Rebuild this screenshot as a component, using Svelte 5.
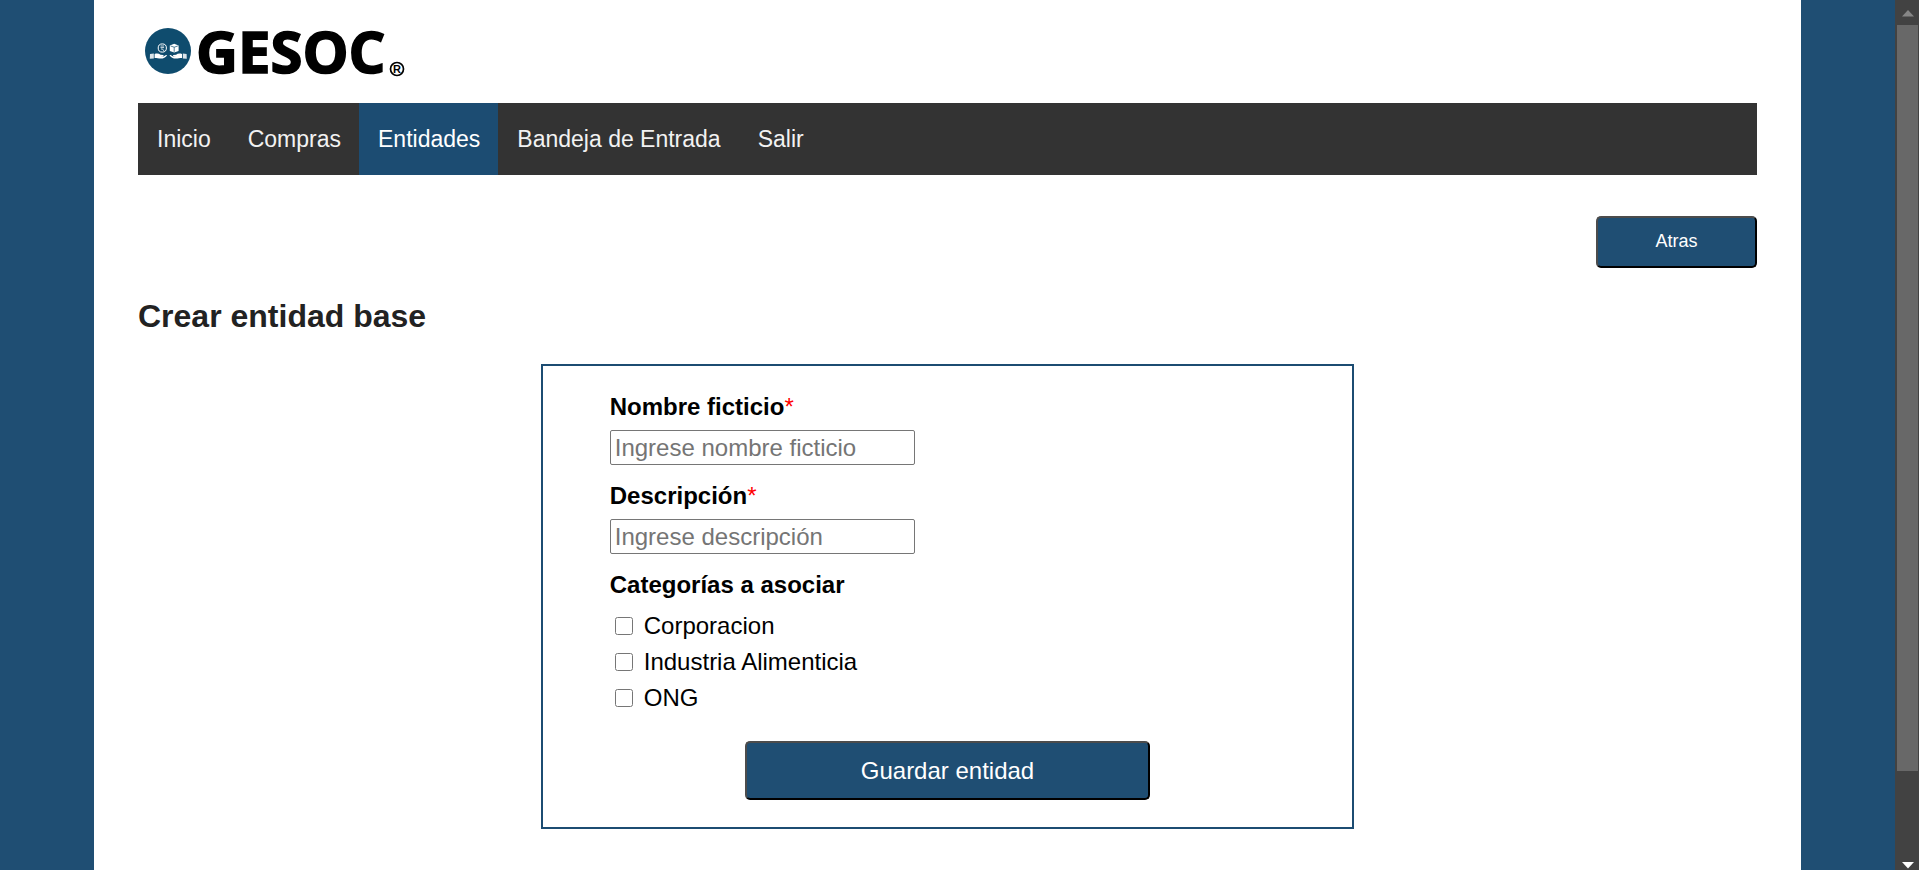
<script>
  const links = [
    { text: 'Inicio' },
    { text: 'Compras' },
    { text: 'Entidades', active: true },
    { text: 'Bandeja de Entrada' },
    { text: 'Salir' }
  ];
  const fields = [
    { id: 'nombre', label: 'Nombre ficticio', placeholder: 'Ingrese nombre ficticio' },
    { id: 'descripcion', label: 'Descripción', placeholder: 'Ingrese descripción' }
  ];
  const categories = ['Corporacion', 'Industria Alimenticia', 'ONG'];
</script>

{#snippet hand()}
  <path d="M12 32l3.8-.6v5.2l-4 .2z" opacity=".85" />
  <path d="M16.6 32C19 31.2 21 31.6 22.5 32.7L25 33C26 33.3 25.6 34.2 25 34.2H22.3L25.5 34.5 28 33.1C28.9 32.7 29.2 33.4 28.6 33.9 26.5 35.8 25 36.6 22.8 36.5 20.5 36.4 19 35.9 16.6 35.9z" />
{/snippet}

<div class="screen">
  <div class="backdrop">
    <div class="page">
      <header>
        <svg class="logo" width="280" height="100" viewBox="0 -22 280 100" role="img" aria-label="GESOC">
          <circle cx="30" cy="29" r="23" fill="#0f4c6e" />
          <g fill="none" stroke="#fff">
            <circle cx="24.3" cy="26" r="4.1" stroke-width="1" />
            <path d="M22.5 24h3.6M22.5 25.6h3.6M23 27h1.5l1.6 2" stroke-width="0.8" />
          </g>
          <path d="M31.8 23.4l4.4-1.6 4.4 1.6v5.6l-4.4 1.6-4.4-1.6z" fill="#fff" />
          <path d="M32.6 24l3.6 1.2 3.6-1.2M36.2 25.2v4.6" fill="none" stroke="#0f4c6e" stroke-width="0.7" />
          <g fill="#fff">{@render hand()}</g>
          <g fill="#fff" transform="translate(60.6 0) scale(-1 1)">{@render hand()}</g>
          <text class="brand" x="58" y="51">GESOC</text>
          <circle cx="259" cy="47" r="6.5" fill="none" stroke="#000" stroke-width="1.7" />
          <text class="mark" x="259" y="51" text-anchor="middle">R</text>
        </svg>
      </header>

      <nav>
        {#each links as link}
          <a href="#top" class:active={link.active}>{link.text}</a>
        {/each}
      </nav>

      <div class="toolbar">
        <button type="button" class="back">Atras</button>
      </div>

      <h1>Crear entidad base</h1>

      <form>
        {#each fields as field}
          <div class="field">
            <label class="title" for={field.id}>{field.label}<span>*</span></label>
            <input type="text" id={field.id} placeholder={field.placeholder} />
          </div>
        {/each}
        <fieldset>
          <legend class="title">Categorías a asociar</legend>
          {#each categories as category}
            <label class="option"><input type="checkbox" />{category}</label>
          {/each}
        </fieldset>
        <button type="button" class="save">Guardar entidad</button>
      </form>
    </div>
  </div>

  <div class="scrollbar" aria-hidden="true">
    <svg width="12" height="7" viewBox="0 0 12 7"><path d="M6 0l6 6.5H0z" fill="#868686" /></svg>
    <div class="thumb"></div>
    <svg width="12" height="7" viewBox="0 0 12 7"><path d="M6 6.5L12 0H0z" fill="#fff" /></svg>
  </div>
</div>

<style>
  :global(body) {
    background: #1f4e73;
  }
  .screen,
  .screen * {
    box-sizing: border-box;
  }
  .screen {
    display: grid;
    grid-template-columns: 1fr 24px;
    min-height: 100vh;
    font-family: "Liberation Sans", Arial, sans-serif;
    font-size: 24px;
    color: #000;
  }
  .backdrop {
    display: grid;
    padding: 0 94px;
    background: #1f4e73;
  }
  .page {
    padding: 0 44px 40px;
    background: #fff;
  }
  header {
    padding-bottom: 3px;
  }
  .logo {
    display: block;
  }
  .brand {
    font: 700 58px "Open Sans", sans-serif;
    stroke: #000;
    stroke-width: 1.6px;
  }
  .mark {
    font: 700 11px "Liberation Sans", Arial, sans-serif;
  }
  nav {
    display: flex;
    background: #333;
  }
  nav a {
    padding: 0 18px 0 19px;
    font-size: 23px;
    line-height: 72px;
    color: #f2f2f2;
    text-decoration: none;
  }
  nav a.active {
    background: #1c4c72;
    color: #fff;
  }
  .toolbar {
    display: flex;
    justify-content: flex-end;
    padding-top: 41px;
  }
  button {
    border: 2px solid;
    border-color: #4c4c4c #000 #000 #4c4c4c;
    border-radius: 5px;
    background: #1f4e73;
    color: #fff;
    font-family: inherit;
    cursor: pointer;
  }
  .back {
    width: 161px;
    height: 52px;
    padding: 0 0 2px;
    font-size: 18px;
  }
  h1 {
    margin: 28px 0;
    font-size: 32px;
    line-height: 40px;
    color: #222;
  }
  form {
    display: flex;
    flex-direction: column;
    gap: 17px;
    width: calc(50% + 4px);
    min-width: 460px;
    margin: 0 auto;
    padding: 27px 67px;
    border: 2px solid #1c4c72;
  }
  .field {
    display: flex;
    flex-direction: column;
    align-items: flex-start;
    gap: 9px;
  }
  .title {
    padding: 0;
    font-weight: 700;
    line-height: 28px;
  }
  .title span {
    font-weight: 400;
    color: #f00;
  }
  input[type="text"] {
    width: 305px;
    height: 35px;
    padding: 0 4px;
    border: 1px solid #767676;
    border-radius: 2px;
    font: inherit;
  }
  input::placeholder {
    color: #757575;
  }
  fieldset {
    display: flex;
    flex-direction: column;
    margin: 0;
    padding: 0;
    border: 0;
  }
  legend {
    margin-bottom: 9px;
  }
  .option {
    display: flex;
    align-items: center;
    gap: 11px;
    line-height: 36px;
  }
  input[type="checkbox"] {
    width: 18px;
    height: 18px;
    margin: 0 0 0 5px;
  }
  .save {
    align-self: center;
    width: 60%;
    height: 59px;
    margin-top: 8px;
    padding: 0;
    font-size: 24px;
  }
  .scrollbar {
    display: flex;
    flex-direction: column;
    align-items: center;
    padding: 10px 1px 1px 2px;
    background: #424242;
  }
  .thumb {
    width: 100%;
    flex: 1;
    margin: 8px 0 91px;
    background: #686868;
  }
</style>
